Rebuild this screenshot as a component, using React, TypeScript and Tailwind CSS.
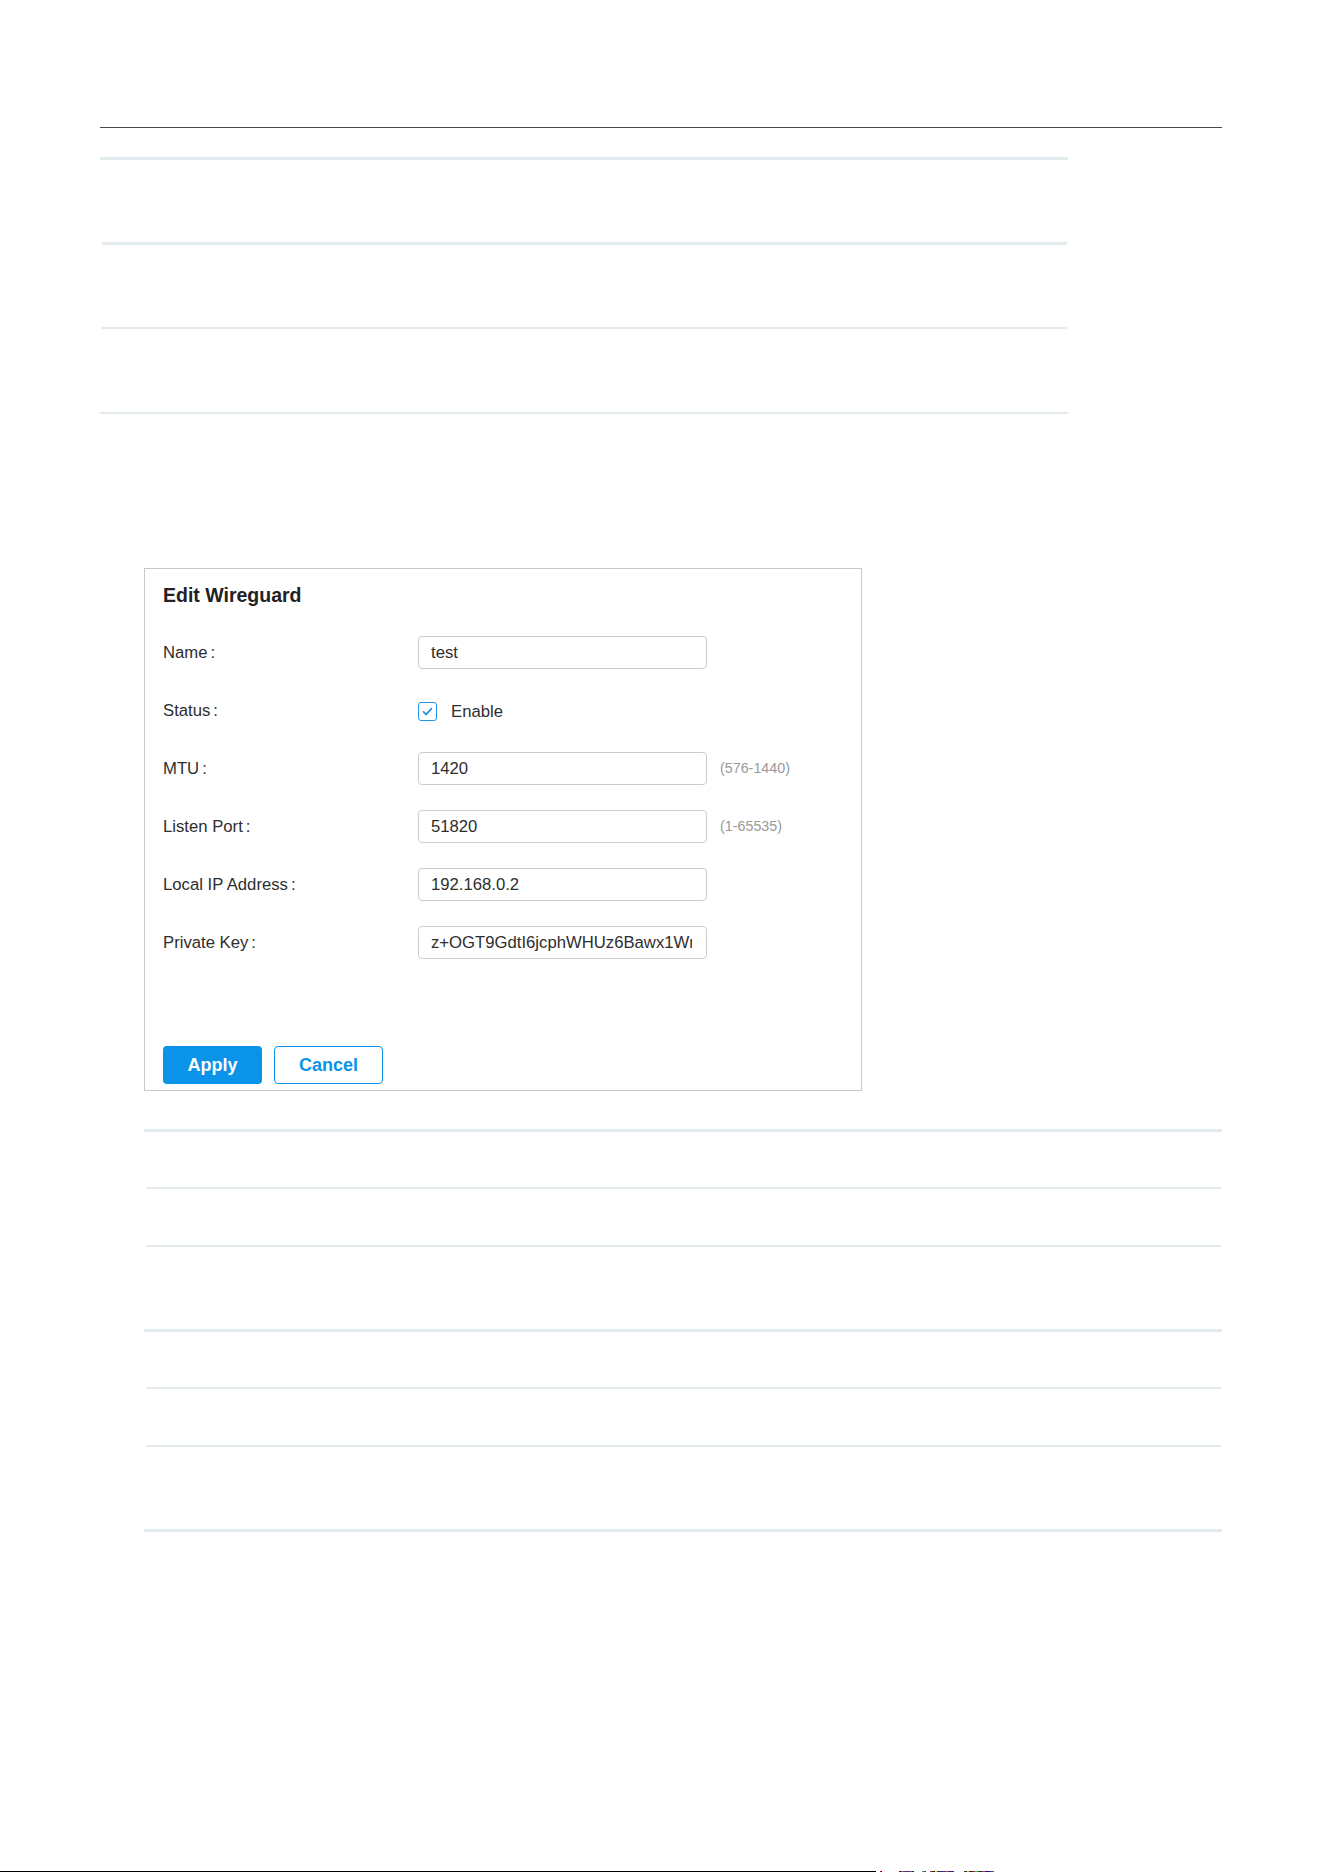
import React from 'react';

type Field = {
  label: string;
  value?: string;
  hint?: string;
  checkbox?: string;
};

const fields: Field[] = [
  { label: 'Name', value: 'test' },
  { label: 'Status', checkbox: 'Enable' },
  { label: 'MTU', value: '1420', hint: '(576-1440)' },
  { label: 'Listen Port', value: '51820', hint: '(1-65535)' },
  { label: 'Local IP Address', value: '192.168.0.2' },
  { label: 'Private Key', value: 'z+OGT9GdtI6jcphWHUz6Bawx1WnQ4kR2vLs8yEo3pXcM=' },
];

// stray pixels at the very bottom edge of the capture
const noise: [number, string][] = [
  [4, 'transparent'], [1, '#d11'], [1, '#111'], [17, 'transparent'], [2, '#222'], [3, '#c33'],
  [2, '#33c'], [4, '#444'], [2, '#a3a'], [2, '#222'], [8, 'transparent'], [2, '#2aa'], [2, '#444'],
  [4, 'transparent'], [2, '#d22'], [3, '#222'], [2, '#dd2'], [4, '#333'], [2, '#22d'], [3, '#444'],
  [2, '#d2d'], [4, '#333'], [2, '#22c'], [10, 'transparent'], [3, '#333'], [2, '#dc2'], [4, '#222'],
  [2, '#c22'], [3, '#2c2'], [5, '#333'], [2, '#d2d'], [4, '#222'], [2, '#22d'], [3, '#555'],
];

function Line({ thick, inset }: { thick?: boolean; inset?: boolean }) {
  return (
    <div
      className={`${thick ? 'h-[3px]' : 'h-[2px]'} ${inset ? 'ml-[2px] mr-[1px]' : ''} bg-[#e3ebef]`}
    />
  );
}

function CheckBox() {
  return (
    <span className="flex h-[19px] w-[19px] items-center justify-center rounded-[3px] border border-[#2196e6] bg-white">
      <svg width="13" height="13" viewBox="0 0 13 13" fill="none">
        <polyline
          points="2.5,6.8 5.2,9.4 10.5,3.6"
          stroke="#1a8fe2"
          strokeWidth="1.6"
          strokeLinecap="round"
          strokeLinejoin="round"
        />
      </svg>
    </span>
  );
}

function FormRow({ field }: { field: Field }) {
  return (
    <div className="flex h-[33px] items-center">
      <div className="w-[255px] pt-px text-[16.7px] text-[#2e2e2e]">
        {field.label}
        <span className="ml-[3px]">:</span>
      </div>
      {field.checkbox ? (
        <label className="flex items-center gap-[14px] pt-[2px] text-[16.7px] text-[#2e2e2e]">
          <CheckBox />
          {field.checkbox}
        </label>
      ) : (
        <input
          defaultValue={field.value}
          readOnly
          className="h-[33px] w-[289px] rounded-[4px] border border-[#cdcdcd] bg-white pl-[12px] pr-[14px] pt-px text-[16.7px] text-[#2e2e2e] outline-none"
        />
      )}
      {field.hint && <span className="ml-[13px] text-[14.3px] text-[#999]">{field.hint}</span>}
    </div>
  );
}

function EditWireguard() {
  return (
    <div className="ml-[144px] mt-[154px] box-border flex h-[523px] w-[718px] flex-col border border-[#c8c8c8] px-[18px] pt-[14px]">
      <h2 className="text-[19.5px] font-bold leading-[24px] text-[#222]">Edit Wireguard</h2>
      <div className="mt-[29px] flex flex-col gap-[25px]">
        {fields.map((f) => (
          <FormRow key={f.label} field={f} />
        ))}
      </div>
      <div className="mt-[87px] flex gap-[12px]">
        <button className="h-[38px] w-[99px] rounded-[4px] bg-[#0a93e8] text-[18px] font-bold text-white">
          Apply
        </button>
        <button className="h-[38px] w-[109px] rounded-[4px] border border-[#0a93e8] bg-white text-[18px] font-bold text-[#0a93e8]">
          Cancel
        </button>
      </div>
    </div>
  );
}

function RowGroup() {
  return (
    <>
      <Line thick />
      <div className="h-[55px]" />
      <Line inset />
      <div className="h-[56px]" />
      <Line inset />
      <div className="h-[82px]" />
    </>
  );
}

export default function App() {
  return (
    <div
      className="flex h-[1872px] w-[1324px] flex-col bg-white pt-[127px]"
      style={{ fontFamily: '"Liberation Sans", Arial, sans-serif' }}
    >
      <div className="ml-[100px] h-px w-[1122px] bg-[#484848]" />

      <div className="ml-[100px] mt-[29px] flex w-[968px] flex-col">
        <Line thick />
        <div className="h-[82px]" />
        <Line thick inset />
        <div className="h-[82px]" />
        <Line inset />
        <div className="h-[83px]" />
        <Line />
      </div>

      <EditWireguard />

      <div className="ml-[144px] mt-[38px] flex w-[1078px] flex-col">
        <RowGroup />
        <RowGroup />
        <Line thick />
      </div>

      <div className="mt-auto flex h-px">
        <div className="w-[876px] bg-black" />
        {noise.map(([w, c], i) => (
          <div key={i} className="h-px" style={{ width: w, background: c }} />
        ))}
      </div>
    </div>
  );
}
